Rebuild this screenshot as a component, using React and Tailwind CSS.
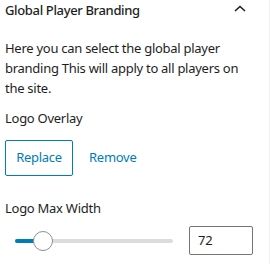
const App = () => {
  return (
    <div
      className="w-[270px] h-[264px] bg-white border-r border-[#f0f0f0] overflow-hidden text-[#1e1e1e] tracking-[-0.27px]"
      style={{ fontFamily: '"Noto Sans", "Open Sans", sans-serif' }}
    >
      {/* Panel header */}
      <div className="flex items-center justify-between h-[20px] pl-[5px] pr-[23px]">
        <h2 className="text-[13px] leading-[20px] font-medium tracking-[-0.35px]">Global Player Branding</h2>
        <svg width="12" height="7" viewBox="0 0 12 7" className="mt-[-4px]">
          <path d="M1 6 L6 1.5 L11 6" fill="none" stroke="#1e1e1e" strokeWidth="1.6" />
        </svg>
      </div>

      {/* Panel body */}
      <div className="pl-[5px] pr-[16px] pt-[18px]">
        <p className="text-[13px] leading-[20px]">
          Here you can select the global player branding This will apply to all players on the site.
        </p>

        <div className="mt-[10px] text-[13px] leading-[20px]">Logo Overlay</div>

        <div className="mt-[12px] flex items-center gap-[4px]">
          <button className="h-[36px] w-[68px] border border-[#007cba] rounded-[2px] text-[13px] text-[#007cba]">
            Replace
          </button>
          <button className="h-[36px] px-[12px] text-[13px] text-[#007cba]">Remove</button>
        </div>

        <div className="mt-[22px] text-[13px] leading-[20px]">Logo Max Width</div>

        <div className="mt-[8px] flex items-center">
          <div className="relative w-[158px] h-[4px] ml-[10px] bg-[#dcdcde] rounded-full">
            <div className="absolute left-0 top-0 h-[4px] w-[28px] bg-[#007cba] rounded-l-full" />
            <div className="absolute left-[18px] top-[-8px] w-[20px] h-[20px] rounded-full bg-white border border-[#8c8f94]" />
          </div>
          <div className="ml-[16px] w-[64px] h-[29px] border border-[#757575] rounded-[2px] flex items-center pl-[8px] text-[13px]">
            72
          </div>
        </div>
      </div>
    </div>
  )
}

export default App
